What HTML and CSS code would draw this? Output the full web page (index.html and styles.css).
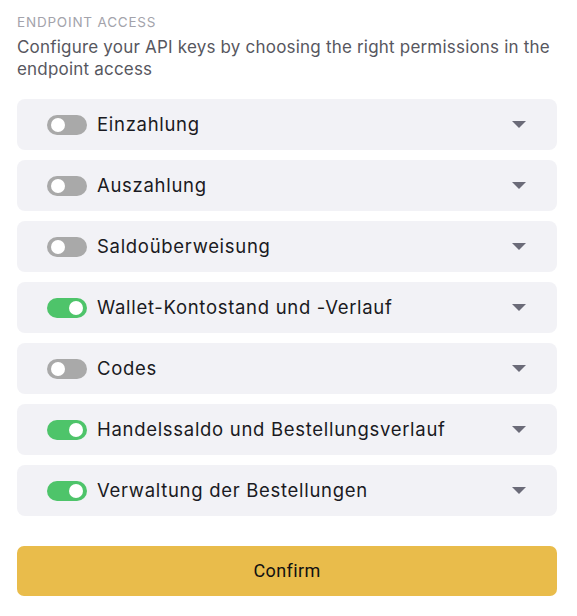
FILE: index.html
```html
<!DOCTYPE html>
<html>
<head>
<meta charset="utf-8">
<link rel="stylesheet" href="styles.css">
</head>
<body>
<div class="panel">
  <div class="eyebrow">ENDPOINT ACCESS</div>
  <p class="desc">Configure your API keys by choosing the right permissions in the endpoint access</p>
  <div class="list">
    <div class="row"><span class="toggle"></span><span class="label">Einzahlung</span><span class="caret"></span></div>
    <div class="row"><span class="toggle"></span><span class="label">Auszahlung</span><span class="caret"></span></div>
    <div class="row"><span class="toggle"></span><span class="label">Saldoüberweisung</span><span class="caret"></span></div>
    <div class="row"><span class="toggle on"></span><span class="label">Wallet-Kontostand und -Verlauf</span><span class="caret"></span></div>
    <div class="row"><span class="toggle"></span><span class="label">Codes</span><span class="caret"></span></div>
    <div class="row"><span class="toggle on"></span><span class="label">Handelssaldo und Bestellungsverlauf</span><span class="caret"></span></div>
    <div class="row"><span class="toggle on"></span><span class="label">Verwaltung der Bestellungen</span><span class="caret"></span></div>
  </div>
  <button class="confirm">Confirm</button>
</div>
</body>
</html>
```
FILE: styles.css
```css
* { box-sizing: border-box; }
body {
  margin: 0;
  background: #fff;
  font-family: Inter, "Noto Sans", sans-serif;
}
.panel {
  padding: 13px 20px 0 17px;
  display: flex;
  flex-direction: column;
}
.eyebrow {
  font-size: 13.5px;
  letter-spacing: 0.8px;
  color: #a3a3ab;
  line-height: 18px;
}
.desc {
  margin: 5px 0 0;
  font-size: 17px;
  letter-spacing: 0.2px;
  line-height: 22px;
  color: #575760;
}
.list {
  margin-top: 19px;
  display: flex;
  flex-direction: column;
  gap: 10px;
}
.row {
  height: 51px;
  background: #f2f2f6;
  border-radius: 8px;
  display: flex;
  align-items: center;
  padding: 0 30px 0 30px;
}
.toggle {
  position: relative;
  width: 40px;
  height: 20px;
  border-radius: 10px;
  background: #a9a9a9;
  flex: none;
}
.toggle::after {
  content: "";
  position: absolute;
  top: 3px;
  left: 4px;
  width: 14px;
  height: 14px;
  border-radius: 50%;
  background: #fff;
}
.toggle.on { background: #4ec46a; }
.toggle.on::after { left: 22px; }
.label {
  margin-left: 10px;
  font-size: 18.5px;
  letter-spacing: 0.7px;
  line-height: 22px;
  padding-bottom: 2px;
  color: #1a1a22;
  flex: 1;
}
.caret {
  width: 0;
  height: 0;
  border-left: 7px solid transparent;
  border-right: 7px solid transparent;
  border-top: 7px solid #6b6b78;
  margin-right: 1px;
}
.confirm {
  margin-top: 30px;
  height: 50px;
  border: none;
  border-radius: 7px;
  background: #e9bc4b;
  font-family: Roboto, "Liberation Sans", sans-serif;
  font-size: 18px;
  letter-spacing: 0.4px;
  padding: 0 0 2px;
  color: #111;
}
```
